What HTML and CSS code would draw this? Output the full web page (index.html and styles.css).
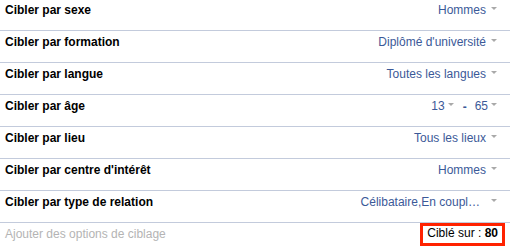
FILE: index.html
```html
<!DOCTYPE html>
<html lang="fr">
<head>
<meta charset="utf-8">
<title>Ciblage</title>
<link rel="stylesheet" href="styles.css">
</head>
<body>
<div class="targeting">
  <div class="row">
    <span class="label">Cibler par sexe</span>
    <span class="value">Hommes<i class="caret"></i></span>
  </div>
  <div class="row">
    <span class="label">Cibler par formation</span>
    <span class="value">Diplômé d'université<i class="caret"></i></span>
  </div>
  <div class="row">
    <span class="label">Cibler par langue</span>
    <span class="value">Toutes les langues<i class="caret"></i></span>
  </div>
  <div class="row">
    <span class="label">Cibler par âge</span>
    <span class="value age"><span class="num">13<i class="caret tight"></i></span><span class="dash">-</span><span class="num">65<i class="caret tight"></i></span></span>
  </div>
  <div class="row">
    <span class="label">Cibler par lieu</span>
    <span class="value">Tous les lieux<i class="caret"></i></span>
  </div>
  <div class="row">
    <span class="label">Cibler par centre d'intérêt</span>
    <span class="value">Hommes<i class="caret"></i></span>
  </div>
  <div class="row">
    <span class="label">Cibler par type de relation</span>
    <span class="value">Célibataire,En coupl…<i class="caret wide"></i></span>
  </div>
  <div class="footer">
    <span class="more">Ajouter des options de ciblage</span>
    <span class="count">Ciblé sur : <b>80</b></span>
  </div>
</div>
</body>
</html>
```

FILE: styles.css
```css
html, body {
  margin: 0;
  padding: 0;
  background: #ffffff;
}

body {
  font-family: "Liberation Sans", Arial, Helvetica, sans-serif;
  font-size: 12px;
  color: #000000;
}

.targeting {
  width: 510px;
  margin-top: -1px;
}

.row {
  display: flex;
  justify-content: space-between;
  align-items: baseline;
  height: 17px;
  line-height: 17px;
  padding: 3px 13px 11px 5px;
  border-bottom: 1px solid #c3cbdc;
}

.label {
  font-weight: bold;
  color: #000000;
}

.value {
  color: #3b5998;
  white-space: nowrap;
}

.caret {
  display: inline-block;
  width: 0;
  height: 0;
  margin-left: 5px;
  border-left: 3px solid transparent;
  border-right: 3px solid transparent;
  border-top: 3px solid #a9a9a9;
  vertical-align: 4px;
}

.caret.tight {
  margin-left: 3px;
}

.caret.wide {
  margin-left: 11px;
}

.age {
  display: flex;
  align-items: baseline;
}

.dash {
  margin: 0 8px 0 9px;
  font-weight: bold;
  position: relative;
  top: 1px;
}

.footer {
  display: flex;
  justify-content: space-between;
  align-items: flex-start;
  padding: 0 5px 0 5px;
}

.more {
  color: #b4b4b4;
  line-height: 15px;
  padding-top: 4px;
}

.count {
  border: 3px solid #ff2200;
  padding: 0 4px 2px 4px;
  line-height: 15px;
  color: #000000;
  background: #ffffff;
}

.count b {
  font-weight: bold;
}
```
